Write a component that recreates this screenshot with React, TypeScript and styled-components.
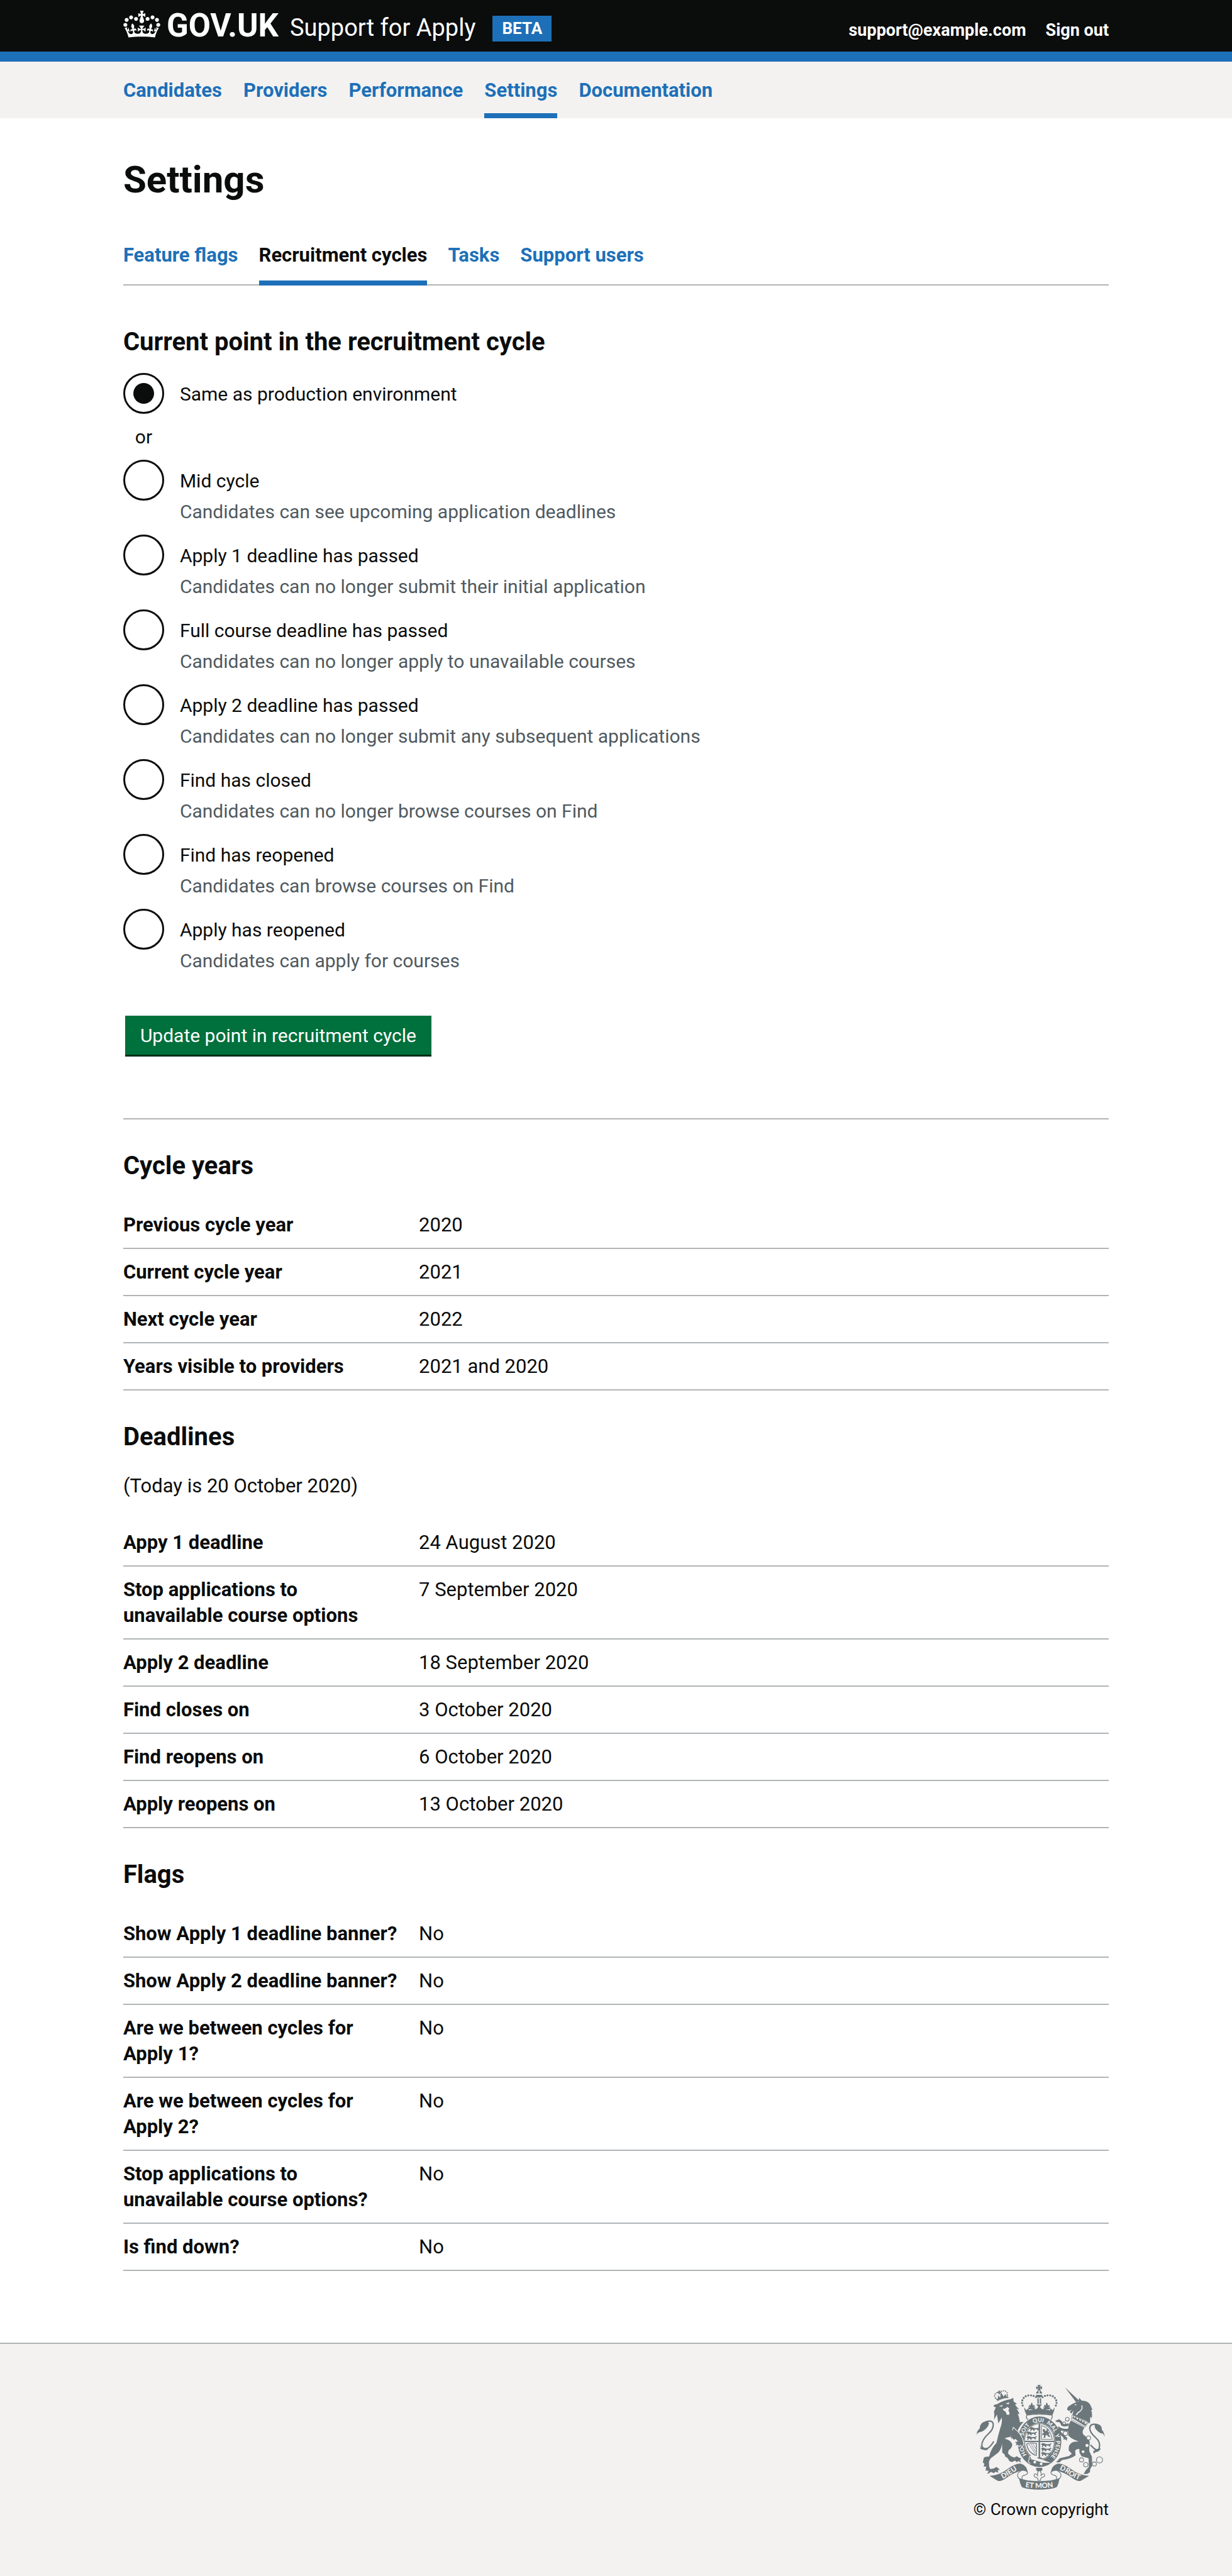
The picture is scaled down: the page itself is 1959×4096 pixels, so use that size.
import React, { useState } from 'react';
import styled, { createGlobalStyle } from 'styled-components';

const colour = {
  black: '#0b0c0c',
  blue: '#1d70b8',
  green: '#00703c',
  greenShadow: '#002d18',
  grey: '#b1b4b6',
  light: '#f3f2f1',
  hint: '#505a5f',
  crest: '#6c777b',
  white: '#ffffff',
};

const GlobalStyle = createGlobalStyle`
  *, *::before, *::after { box-sizing: border-box; }
  html { background: ${colour.light}; }
  body {
    margin: 0;
    background: ${colour.white};
    color: ${colour.black};
    font-family: Roboto, "Liberation Sans", sans-serif;
    font-size: 30px;
    line-height: 41px;
  }
`;

const Container = styled.div`
  width: 80%;
  min-width: 1000px;
  margin: 0 auto;
`;

/* ---------- header ---------- */

const Header = styled.header`
  background: ${colour.black};
  color: ${colour.white};
  border-bottom: 16px solid ${colour.blue};
`;

const HeaderRow = styled(Container)`
  display: flex;
  align-items: flex-start;
  justify-content: space-between;
  height: 82px;
`;

const Brand = styled.div`
  display: flex;
  align-items: flex-start;
`;

const HomeLink = styled.a`
  display: flex;
  align-items: flex-start;
  gap: 10px;
  padding-top: 17px;
  color: inherit;
  text-decoration: none;
`;

const CrownMark = styled.svg`
  display: block;
  width: 59px;
  height: 43px;
  fill: currentColor;
`;

const LogoText = styled.span`
  font-size: 51px;
  font-weight: 700;
  line-height: 47px;
`;

const ServiceLink = styled.a`
  margin: 24px 27px 0 18px;
  color: inherit;
  font-size: 38px;
  line-height: 41px;
  text-decoration: none;
`;

const Tag = styled.strong`
  margin-top: 25px;
  padding: 0 15px;
  background: ${colour.blue};
  font-size: 26px;
`;

const AccountLinks = styled.nav`
  display: flex;
  gap: 31px;
  padding-top: 28px;
`;

const AccountLink = styled.a`
  color: inherit;
  font-size: 27px;
  font-weight: 700;
  text-decoration: none;
`;

/* ---------- navigation ---------- */

const PrimaryBar = styled.nav`
  background: ${colour.light};
`;

const PrimaryList = styled(Container)`
  display: flex;
  gap: 34px;
`;

const NavLink = styled.a<{ $current?: boolean; $text?: string }>`
  padding: 25px 0 16px;
  border-bottom: 8px solid ${(p) => (p.$current ? colour.blue : 'transparent')};
  color: ${(p) => p.$text ?? colour.blue};
  font-size: 31px;
  font-weight: 700;
  text-decoration: none;
`;

const TabBar = styled.nav`
  display: flex;
  gap: 33px;
  margin: 42px 0 65px;
  box-shadow: inset 0 -2px ${colour.grey};
`;

const TabLink = styled(NavLink)`
  padding-bottom: 20px;
`;

/* ---------- content ---------- */

const Main = styled.main`
  padding: 65px 0 114px;
`;

const PageTitle = styled.h1`
  margin: 0;
  font-size: 60px;
  line-height: 65px;
`;

const SectionTitle = styled.h2`
  margin: 49px 0 33px;
  font-size: 40px;
  line-height: 49px;
`;

const Fieldset = styled.fieldset`
  min-width: 0;
  margin: 0;
  padding: 0;
  border: 0;
`;

const Legend = styled.legend`
  margin-bottom: 25px;
  padding: 0;
  font-size: 40px;
  font-weight: 700;
  line-height: 49px;
`;

const Choice = styled.div`
  display: grid;
  grid-template-columns: 65px 1fr;
  column-gap: 25px;
  min-height: 65px;
  margin-bottom: 16px;
`;

const Radio = styled.input`
  display: grid;
  place-content: center;
  grid-row: 1 / span 2;
  width: 65px;
  height: 65px;
  margin: 0;
  appearance: none;
  border: 3px solid ${colour.black};
  border-radius: 50%;
  cursor: pointer;

  &:checked::before {
    content: '';
    width: 33px;
    height: 33px;
    border-radius: 50%;
    background: ${colour.black};
  }
`;

const ChoiceLabel = styled.label`
  justify-self: start;
  padding: 13px 0 8px;
`;

const Hint = styled.span`
  grid-column: 2;
  color: ${colour.hint};
`;

const Divider = styled.div`
  width: 65px;
  margin-bottom: 16px;
  text-align: center;
`;

const SubmitButton = styled.button`
  display: block;
  height: 62px;
  margin: 51px 3px 0;
  padding: 0 24px;
  border: 0;
  background: ${colour.green};
  box-shadow: 0 3px ${colour.greenShadow};
  color: ${colour.white};
  font: inherit;
  cursor: pointer;
`;

const Rule = styled.hr`
  height: 2px;
  margin: 101px 0 48px;
  border: 0;
  background: ${colour.grey};
`;

const Paragraph = styled.p`
  margin: 0 0 33px;
  font-size: 31px;
`;

const Summary = styled.table`
  width: 100%;
  border-collapse: separate;
  border-spacing: 0;
  table-layout: fixed;
  font-size: 31px;
`;

const SummaryKey = styled.th`
  width: 30%;
  padding: 16px 32px 16px 0;
  border-bottom: 2px solid ${colour.grey};
  font-weight: 700;
  text-align: left;
  vertical-align: top;
`;

const SummaryValue = styled.td`
  padding: 16px 0;
  border-bottom: 2px solid ${colour.grey};
  vertical-align: top;
`;

/* ---------- footer ---------- */

const Footer = styled.footer`
  padding: 65px 0 86px;
  border-top: 2px solid ${colour.grey};
  background: ${colour.light};
`;

const FooterRow = styled(Container)`
  display: flex;
  justify-content: flex-end;
`;

const Copyright = styled.a`
  display: flex;
  flex-direction: column;
  align-items: center;
  gap: 11px;
  color: ${colour.black};
  font-size: 26px;
  text-decoration: none;
`;

const CrestArt = styled.svg`
  display: block;
  width: 204px;
  height: 167px;
  fill: ${colour.crest};
  stroke: none;
  font-family: Lato, sans-serif;
  font-weight: 900;
`;

/* ---------- drawings ---------- */

const Crown = () => (
  <CrownMark viewBox="0 0 132 97" aria-hidden="true">
    <path
      fillRule="evenodd"
      d="M25 30.2c3.5 1.5 7.7-.2 9.1-3.7 1.5-3.6-.2-7.8-3.9-9.2-3.6-1.4-7.6.3-9.1 3.9-1.4 3.5.3 7.5 3.9 9zM9 39.5c3.6 1.5 7.8-.2 9.2-3.7 1.5-3.6-.2-7.8-3.9-9.1-3.6-1.5-7.6.2-9.1 3.8-1.4 3.5.3 7.5 3.8 9zM4.4 57.2c3.5 1.5 7.7-.2 9.1-3.8 1.5-3.6-.2-7.7-3.9-9.1-3.5-1.5-7.6.3-9.1 3.8-1.4 3.5.3 7.6 3.9 9.1zm38.3-21.4c3.5 1.5 7.7-.2 9.1-3.8 1.5-3.6-.2-7.7-3.9-9.1-3.6-1.5-7.6.3-9.1 3.8-1.3 3.6.4 7.7 3.9 9.1zm64.4-5.6c-3.6 1.5-7.8-.2-9.1-3.7-1.5-3.6.2-7.8 3.8-9.2 3.6-1.4 7.7.3 9.2 3.9 1.3 3.5-.4 7.5-3.9 9zm15.9 9.3c-3.6 1.5-7.7-.2-9.1-3.7-1.5-3.6.2-7.8 3.7-9.1 3.6-1.5 7.7.2 9.2 3.8 1.5 3.5-.3 7.5-3.8 9zm4.7 17.7c-3.6 1.5-7.8-.2-9.2-3.8-1.5-3.6.2-7.7 3.9-9.1 3.6-1.5 7.7.3 9.2 3.8 1.3 3.5-.4 7.6-3.9 9.1zM89.3 35.8c-3.6 1.5-7.8-.2-9.2-3.8-1.4-3.6.2-7.7 3.9-9.1 3.6-1.5 7.7.3 9.2 3.8 1.4 3.6-.3 7.7-3.9 9.1zM69.7 17.7l8.9 4.7V9.3l-8.9 2.8c-.2-.3-.5-.6-.9-.9L72.4 0H59.6l3.5 11.2c-.3.3-.6.5-.9.9l-8.8-2.8v13.1l8.8-4.7c.3.3.6.7.9.9l-5 15.4v.1c-.2.8-.4 1.6-.4 2.4 0 4.1 3.1 7.5 7 8.1h.2c.3 0 .7.1 1 .1.4 0 .7 0 1-.1h.2c4-.6 7.1-4.1 7.1-8.1 0-.8-.1-1.7-.4-2.4V34l-5.1-15.4c.4-.2.7-.6 1-.9zM66 92.8c16.9 0 32.8 1.1 47.1 3.2 4-16.9 8.9-26.7 14-33.5l-9.6-3.4c1 4.9 1.1 7.2 0 10.2-1.5-1.4-3-4.3-4.2-8.7L108.6 76c2.8-2 5-3.2 7.5-3.3-4.4 9.4-10 11.9-13.6 11.2-4.3-.8-6.3-4.6-5.6-7.9 1-4.7 5.7-5.9 8-.5 4.3-8.7-3-11.4-7.6-8.8 7.1-7.2 7.9-13.5 2.1-21.1-8 6.1-8.1 12.3-4.5 20.8-4.7-5.4-12.1-2.5-9.5 6.2 3.4-5.2 7.9-2 7.2 3.1-.6 4.3-6.4 7.8-13.5 7.2-10.3-.9-10.9-8-11.2-13.8 2.5-.5 7.1 1.8 11 7.3L80.2 60c-4.1 4.4-8 5.3-12.3 5.4 1.4-4.4 8-11.6 8-11.6H55.5s6.4 7.2 7.9 11.6c-4.2-.1-8-1-12.3-5.4l1.4 16.4c3.9-5.5 8.5-7.7 10.9-7.3-.3 5.8-.9 12.8-11.1 13.8-7.2.6-12.9-2.9-13.5-7.2-.7-5 3.8-8.3 7.1-3.1 2.7-8.7-4.6-11.6-9.4-6.2 3.7-8.5 3.6-14.7-4.6-20.8-5.8 7.6-5 13.9 2.2 21.1-4.7-2.6-11.9.1-7.7 8.8 2.3-5.5 7.1-4.2 8.1.5.7 3.3-1.3 7.1-5.7 7.9-3.5.7-9-1.8-13.5-11.2 2.5.1 4.7 1.3 7.5 3.3l-4.7-15.4c-1.2 4.4-2.7 7.2-4.3 8.7-1.1-3-.9-5.3 0-10.2l-9.5 3.4c5 6.9 9.9 16.7 14 33.5 14.8-2.1 30.8-3.2 47.7-3.2z"
    />
  </CrownMark>
);

const archDots = [
  [959, 443], [945, 436], [930, 433], [914, 433], [899, 438], [887, 448], [879, 462], [877, 477], [881, 492],
];
const smallCrownDots = [[717, 437], [720, 425], [730, 417], [758, 409], [770, 406], [782, 409], [790, 418], [791, 430], [722, 449]];
const rings = [[1142, 572, 11], [1123, 597, 9], [1131, 655, 13], [1266, 682, 12], [1225, 810, 12], [1250, 838, 13], [1300, 834, 12], [1330, 810, 18]];
const motto: [string, string][] = [['HO', '17%'], ['SOIT', '35.5%'], ['QUI', '49%'], ['MAL', '61.5%'], ['Y', '70%'], ['PENSE', '81.5%']];
const passant = 'M0 8l6-6 8 1 10 5 14-1 8-5v7l-6 3 4 8h-6l-5-6-10 1 1 7h-6l-2-7-6 2-2 6H3l3-8z';
const fleur = 'M0-17c5 6 8 11 4 19 5-7 13-6 13 1 0 5-4 7-8 5 2 5 7 4 12 0l-4 14h-34l-4-14c5 4 10 5 12 0-4 2-8 0-8-5 0-7 8-8 13-1-4-8-1-13 4-19z';

const Crest = () => (
  <CrestArt viewBox="612 372 750 612" aria-hidden="true">
    <defs>
      <path id="garter" d="M979 822A97 117 0 0 1 979 588A97 117 0 0 1 979 822" />
      <path id="ribbonLeft" d="M748 930Q790 908 812 893T866 859" />
      <path id="ribbonRight" d="M1086 862Q1128 877 1148 894T1220 930" />
      <path id="ribbonMid" d="M880 966Q977 984 1076 966" />
    </defs>

    {/* lion */}
    <path d="M712 490L735 482Q770 462 808 456L826 447L828 468L847 482L836 487Q846 502 861 514L845 511Q857 526 863 543L852 540Q862 562 865 590L886 587Q868 606 852 636L874 672Q884 694 888 718L878 733L868 721L860 731L850 721L839 728L843 711L836 717L837 703L850 701L838 690L828 695L824 683L815 688L813 674L786 680L776 686Q812 693 820 718Q821 738 799 753L795 772L812 788L832 797L846 788L857 796L872 801L866 812L872 826L856 817L846 823L836 814L820 822L803 818Q795 795 780 792L774 776L762 768L760 712Q758 746 738 767L706 792Q688 802 684 822L685 850L692 864L712 860L728 851L748 867L734 871L740 885L722 879L712 888L697 880L673 893L682 874L664 872L668 848L653 850L657 832L648 825L654 797L664 792L685 790Q696 742 728 710Q738 662 757 602Q762 572 758 562L739 597L735 572L730 545L714 575L715 540L713 528L724 502L712 499Z" />
    <path fill={colour.light} d="M742 496l22-7-4 10zM781 480l22-7-4 12zM764 510q16 6 27-10l12 10-6 12q9 8 7 18-3 8-10 7-11-4-11-17l-14-10z" />
    <path d="M730 468Q765 448 799 447L796 440L735 461z" />
    <path d="M724 452L732 462L792 442L793 428L786 440L780 424L770 440L752 412L750 446L736 432L737 452z" />
    <path d="M740 402l5 6 6-4-1 10 6-2-1 8-8-2 1 8-7 1-1-8-8 1 1-8 6 0z" />
    {smallCrownDots.map(([x, y]) => (
      <circle key={`${x}-${y}`} cx={x} cy={y} r="4" />
    ))}
    <path d="M612 664Q612 640 630 626Q630 588 668 585L684 592Q684 610 668 626Q650 646 628 648Q616 652 612 664Z" />
    <path fill="none" stroke={colour.crest} strokeWidth="8" d="M660 589Q705 572 709 602Q710 632 682 656Q640 694 642 728Q650 750 676 742Q692 734 712 702" />
    <path d="M628 724Q644 742 668 744L680 748Q662 758 652 750Q640 754 630 740L638 740Z" />

    {/* unicorn */}
    <path d="M1128 386L1212 464L1194 474Z" />
    <path d="M1208 468L1211 446L1226 464Q1262 462 1276 488L1289 517L1281 519Q1290 540 1284 566L1276 558L1274 597L1252 582L1172 548L1178 520L1166 539L1156 530L1168 515L1153 524L1141 518Q1140 508 1146 500Q1172 478 1208 468Z" />
    <path fill="none" stroke={colour.light} strokeWidth="6" d="M1226 492Q1234 512 1216 526Q1200 534 1194 548" />
    <path fill={colour.light} d="M1182 488l14-4-3 8z" />
    <path fill={colour.light} stroke={colour.crest} strokeWidth="3" d="M1170 546L1264 594L1246 618L1166 574Z" />
    <path d="M1171 566L1178 552L1184 566L1192 558L1200 576L1208 564L1216 584L1226 572L1230 592L1242 582L1244 600L1258 594L1246 612Z" />
    <path d="M1163 580L1242 621Q1226 644 1234 660L1262 684Q1278 700 1271 730L1270 758L1286 792L1287 845L1276 862L1274 882L1258 892L1237 892L1250 870L1268 850L1266 800L1225 789L1213 767L1212 746Q1198 745 1188 754L1190 784Q1160 806 1112 810L1096 824L1076 824L1098 800L1152 787L1168 774L1150 754Q1146 716 1178 705L1208 702Q1170 690 1148 668Q1140 612 1163 580Z" />
    <path d="M1361 673Q1358 650 1344 634Q1344 604 1316 600L1302 606Q1300 626 1318 640Q1334 656 1350 656Z" />
    <path fill="none" stroke={colour.crest} strokeWidth="8" d="M1316 603Q1274 594 1273 626Q1276 652 1304 676Q1340 706 1328 742Q1316 768 1278 722" />
    <path d="M1338 742Q1328 764 1308 764L1296 774L1294 758L1310 750z" />

    {/* crown */}
    <path d="M967 372H987L981 385L994 378V398L981 391L987 404H967L973 391L960 398V378L973 385Z" />
    <path d="M958 422Q962 408 974 405V422zM980 405Q992 408 996 422H980zM957 430H997Q994 446 977 446Q960 446 957 430z" />
    <path d="M967 450h8v32h-8zM981 450h8v32h-8zM960 486h34l-12 14 12 14h-34l12-14z" />
    {archDots.map(([x, y]) => (
      <React.Fragment key={`${x}-${y}`}>
        <circle cx={x} cy={y} r="6" />
        <circle cx={1956 - x} cy={y} r="6" />
      </React.Fragment>
    ))}
    <path transform="translate(934 492)" d={fleur} />
    <path transform="translate(1022 492)" d={fleur} />
    <path d="M890 502L902 520L914 508L918 520Q977 504 1040 520L1044 508L1056 520L1068 502Q1068 520 1054 548Q977 530 904 548Q890 522 890 502Z" />
    <path fill={colour.light} stroke={colour.crest} strokeWidth="5" d="M906 548Q977 536 1052 548Q1058 562 1046 574H910Q898 562 906 548Z" />

    {/* garter and shield */}
    <ellipse cx="979" cy="704" rx="133" ry="152" fill={colour.light} />
    <ellipse cx="979" cy="704" rx="128" ry="148" />
    <ellipse cx="979" cy="702" rx="91" ry="108" fill={colour.light} />
    <ellipse cx="979" cy="702" rx="87" ry="104" fill="none" stroke={colour.crest} strokeWidth="4" />
    <path d="M974 600h9v204h-9zM892 698h174v8H892z" />
    {[616, 642, 668].map((y) => (
      <path key={y} transform={`translate(${y === 616 ? 920 : 903} ${y}) scale(1.3 1.1)`} d={passant} />
    ))}
    {[710, 736, 762].map((y) => (
      <path key={y} transform={`translate(988 ${y}) scale(1.3 1.1)`} d={passant} />
    ))}
    <path fill="none" stroke={colour.crest} strokeWidth="4" d="M990 610Q1040 618 1054 690H990Z" />
    <path d="M1000 628l9 2 6 12 8-6-4-8 14 4-5 12 12 10-8 6 12 16-14-2-8-12-8 8-2 12-12-2 6-6-2-12-10 4 4-12 8-4-8-8z" />
    <path fill="none" stroke={colour.crest} strokeWidth="5" d="M904 716Q932 706 962 714L960 786M904 716Q908 762 956 784" />
    <path fill="none" stroke={colour.crest} strokeWidth="3" d="M916 716L954 774M928 714L956 762M940 714L958 744" />
    <path fill={colour.light} d="M925 786L1000 810L1046 828L1000 826L930 806z" />
    <path d="M966 796h24l12 12-36-8z" />
    <path fill="none" stroke={colour.light} strokeWidth="4" d="M938 788Q912 786 920 806Q904 822 926 830" />
    <g fill={colour.light} fontSize="33" textAnchor="middle">
      {motto.map(([word, at]) => (
        <text key={word}>
          <textPath href="#garter" startOffset={at}>{word}</textPath>
        </text>
      ))}
    </g>
    <circle cx="952" cy="823" r="8" fill={colour.light} />
    <circle cx="989" cy="833" r="8" fill={colour.light} />

    {/* limbs resting on the garter, and the unicorn's chain */}
    <path stroke={colour.light} strokeWidth="4" d="M826 619L858 650Q882 678 888 718L878 735L868 724L860 733L850 723L839 730L842 712L836 717L837 703L850 701L838 690L828 695L812 676Z" />
    <path fill={colour.crest} d="M812 640L834 632L856 656L862 690L812 680Z" />
    <path fill="none" stroke={colour.crest} strokeWidth="14" d="M1150 602Q1128 612 1112 604Q1108 586 1090 580M1150 634Q1118 640 1096 626L1098 650L1128 678" />
    <path d="M1070 582L1094 572L1108 584L1084 590zM1120 668L1142 680L1138 698L1128 688L1120 694z" />
    <g fill={colour.light}>
      <circle cx="1257" cy="726" r="9" />
      <circle cx="1234" cy="762" r="8" />
      <circle cx="1131" cy="655" r="11" />
      <circle cx="1266" cy="682" r="10" />
    </g>
    <g fill="none" stroke={colour.crest} strokeWidth="4">
      {rings.map(([x, y, r]) => (
        <circle key={`${x}-${y}`} cx={x} cy={y} r={r} />
      ))}
    </g>

    {/* fleur-de-lis below the garter */}
    <path d="M960 856h36v14q-8 6-18 14-10-8-18-14z" />
    <path fill={colour.light} stroke={colour.crest} strokeWidth="4" d="M978 870Q996 888 986 904Q998 884 1010 896Q1010 912 994 912L986 920V930H970V920L962 912Q946 912 948 896Q958 884 970 904Q962 888 978 870Z" />

    {/* ribbon */}
    <path d="M687 903Q742 902 792 864Q840 828 872 832Q906 842 911 886Q896 872 874 872Q832 884 790 912Q756 938 734 932Z" />
    <path d="M1269 903Q1214 902 1164 864Q1116 828 1084 832Q1050 842 1045 886Q1060 872 1082 872Q1124 884 1166 912Q1200 938 1222 932Z" />
    <path fill={colour.light} stroke={colour.crest} strokeWidth="4" d="M874 872Q846 886 852 906Q858 926 880 926L876 912Q880 900 896 898Q912 892 910 882Q896 868 874 872ZM1082 872Q1110 886 1104 906Q1098 926 1076 926L1080 912Q1076 900 1060 898Q1044 892 1046 882Q1060 868 1082 872Z" />
    <path d="M860 916Q900 934 977 934Q1056 934 1096 916Q1090 960 1078 970Q1040 984 977 984Q916 984 878 970Q866 956 860 916Z" />
    <g fill={colour.light} fontSize="42" textAnchor="middle">
      <text><textPath href="#ribbonLeft" startOffset="50%">DIEU</textPath></text>
      <text><textPath href="#ribbonMid" startOffset="50%">ET MON</textPath></text>
      <text><textPath href="#ribbonRight" startOffset="50%">DROIT</textPath></text>
    </g>
  </CrestArt>
);

/* ---------- data ---------- */

const primaryItems = ['Candidates', 'Providers', 'Performance', 'Settings', 'Documentation'];
const tabItems = ['Feature flags', 'Recruitment cycles', 'Tasks', 'Support users'];

const points: { id: string; label: string; hint?: string }[] = [
  { id: 'production', label: 'Same as production environment' },
  { id: 'mid-cycle', label: 'Mid cycle', hint: 'Candidates can see upcoming application deadlines' },
  { id: 'apply-1', label: 'Apply 1 deadline has passed', hint: 'Candidates can no longer submit their initial application' },
  { id: 'full-course', label: 'Full course deadline has passed', hint: 'Candidates can no longer apply to unavailable courses' },
  { id: 'apply-2', label: 'Apply 2 deadline has passed', hint: 'Candidates can no longer submit any subsequent applications' },
  { id: 'find-closed', label: 'Find has closed', hint: 'Candidates can no longer browse courses on Find' },
  { id: 'find-reopened', label: 'Find has reopened', hint: 'Candidates can browse courses on Find' },
  { id: 'apply-reopened', label: 'Apply has reopened', hint: 'Candidates can apply for courses' },
];

type Rows = [string, string][];

const cycleYears: Rows = [
  ['Previous cycle year', '2020'],
  ['Current cycle year', '2021'],
  ['Next cycle year', '2022'],
  ['Years visible to providers', '2021 and 2020'],
];

const deadlines: Rows = [
  ['Appy 1 deadline', '24 August 2020'],
  ['Stop applications to unavailable course options', '7 September 2020'],
  ['Apply 2 deadline', '18 September 2020'],
  ['Find closes on', '3 October 2020'],
  ['Find reopens on', '6 October 2020'],
  ['Apply reopens on', '13 October 2020'],
];

const flags: Rows = [
  ['Show Apply 1 deadline banner?', 'No'],
  ['Show Apply 2 deadline banner?', 'No'],
  ['Are we between cycles for Apply 1?', 'No'],
  ['Are we between cycles for Apply 2?', 'No'],
  ['Stop applications to unavailable course options?', 'No'],
  ['Is find down?', 'No'],
];

const SummaryTable = ({ rows }: { rows: Rows }) => (
  <Summary>
    <tbody>
      {rows.map(([key, value]) => (
        <tr key={key}>
          <SummaryKey scope="row">{key}</SummaryKey>
          <SummaryValue>{value}</SummaryValue>
        </tr>
      ))}
    </tbody>
  </Summary>
);

export default function App() {
  const [point, setPoint] = useState('production');

  return (
    <>
      <GlobalStyle />
      <Header>
        <HeaderRow>
          <Brand>
            <HomeLink href="#">
              <Crown />
              <LogoText>GOV.UK</LogoText>
            </HomeLink>
            <ServiceLink href="#">Support for Apply</ServiceLink>
            <Tag>BETA</Tag>
          </Brand>
          <AccountLinks aria-label="Account">
            <AccountLink href="#">support@example.com</AccountLink>
            <AccountLink href="#">Sign out</AccountLink>
          </AccountLinks>
        </HeaderRow>
      </Header>

      <PrimaryBar aria-label="Primary">
        <PrimaryList>
          {primaryItems.map((item) => (
            <NavLink key={item} href="#" $current={item === 'Settings'}>
              {item}
            </NavLink>
          ))}
        </PrimaryList>
      </PrimaryBar>

      <Container>
        <Main>
          <PageTitle>Settings</PageTitle>
          <TabBar aria-label="Settings sections">
            {tabItems.map((item) => {
              const current = item === 'Recruitment cycles';
              return (
                <TabLink key={item} href="#" $current={current} $text={current ? colour.black : undefined}>
                  {item}
                </TabLink>
              );
            })}
          </TabBar>

          <form onSubmit={(event) => event.preventDefault()}>
            <Fieldset>
              <Legend>Current point in the recruitment cycle</Legend>
              {points.map(({ id, label, hint }) => (
                <React.Fragment key={id}>
                  <Choice>
                    <Radio
                      type="radio"
                      name="point"
                      id={id}
                      checked={point === id}
                      onChange={() => setPoint(id)}
                      aria-describedby={hint ? `${id}-hint` : undefined}
                    />
                    <ChoiceLabel htmlFor={id}>{label}</ChoiceLabel>
                    {hint && <Hint id={`${id}-hint`}>{hint}</Hint>}
                  </Choice>
                  {id === 'production' && <Divider>or</Divider>}
                </React.Fragment>
              ))}
            </Fieldset>
            <SubmitButton type="submit">Update point in recruitment cycle</SubmitButton>
          </form>

          <Rule />

          <SectionTitle>Cycle years</SectionTitle>
          <SummaryTable rows={cycleYears} />

          <SectionTitle>Deadlines</SectionTitle>
          <Paragraph>(Today is 20 October 2020)</Paragraph>
          <SummaryTable rows={deadlines} />

          <SectionTitle>Flags</SectionTitle>
          <SummaryTable rows={flags} />
        </Main>
      </Container>

      <Footer>
        <FooterRow>
          <Copyright href="#">
            <Crest />
            © Crown copyright
          </Copyright>
        </FooterRow>
      </Footer>
    </>
  );
}
